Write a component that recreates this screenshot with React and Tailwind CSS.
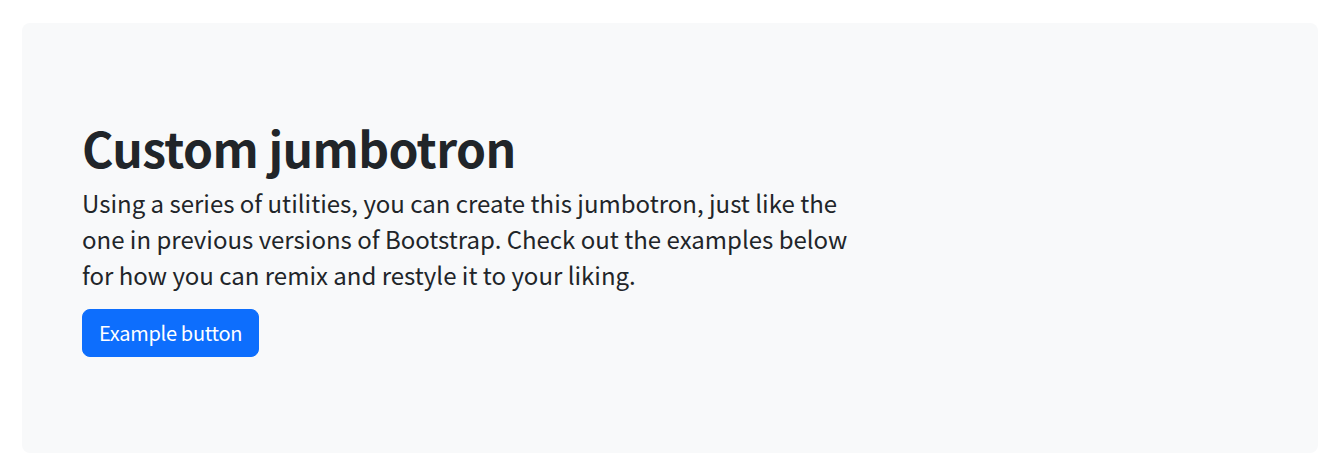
import React from "react";

export default function App() {
  return (
    <div className="pt-[23px] pl-[22px] pr-[19px] pb-[18px] font-['Noto_Sans_CJK_KR',sans-serif] text-[#212529]">
      <div className="rounded-lg bg-[#f8f9fa] px-[60px] py-[96px]">
        <h1 className="text-[48px] font-bold leading-[1.2] tracking-[-0.6px] mb-2">Custom jumbotron</h1>
        <p className="w-[784px] text-[24px] leading-[1.5] mb-4">
          Using a series of utilities, you can create this jumbotron, just like the one in previous versions of Bootstrap. Check out the examples below for how you can remix and restyle it to your liking.
        </p>
        <button
          type="button"
          className="rounded-lg border border-[#0d6efd] bg-[#0d6efd] px-4 py-2 text-[20px] leading-[1.5] tracking-[-0.3px] text-white"
        >
          Example button
        </button>
      </div>
    </div>
  );
}
